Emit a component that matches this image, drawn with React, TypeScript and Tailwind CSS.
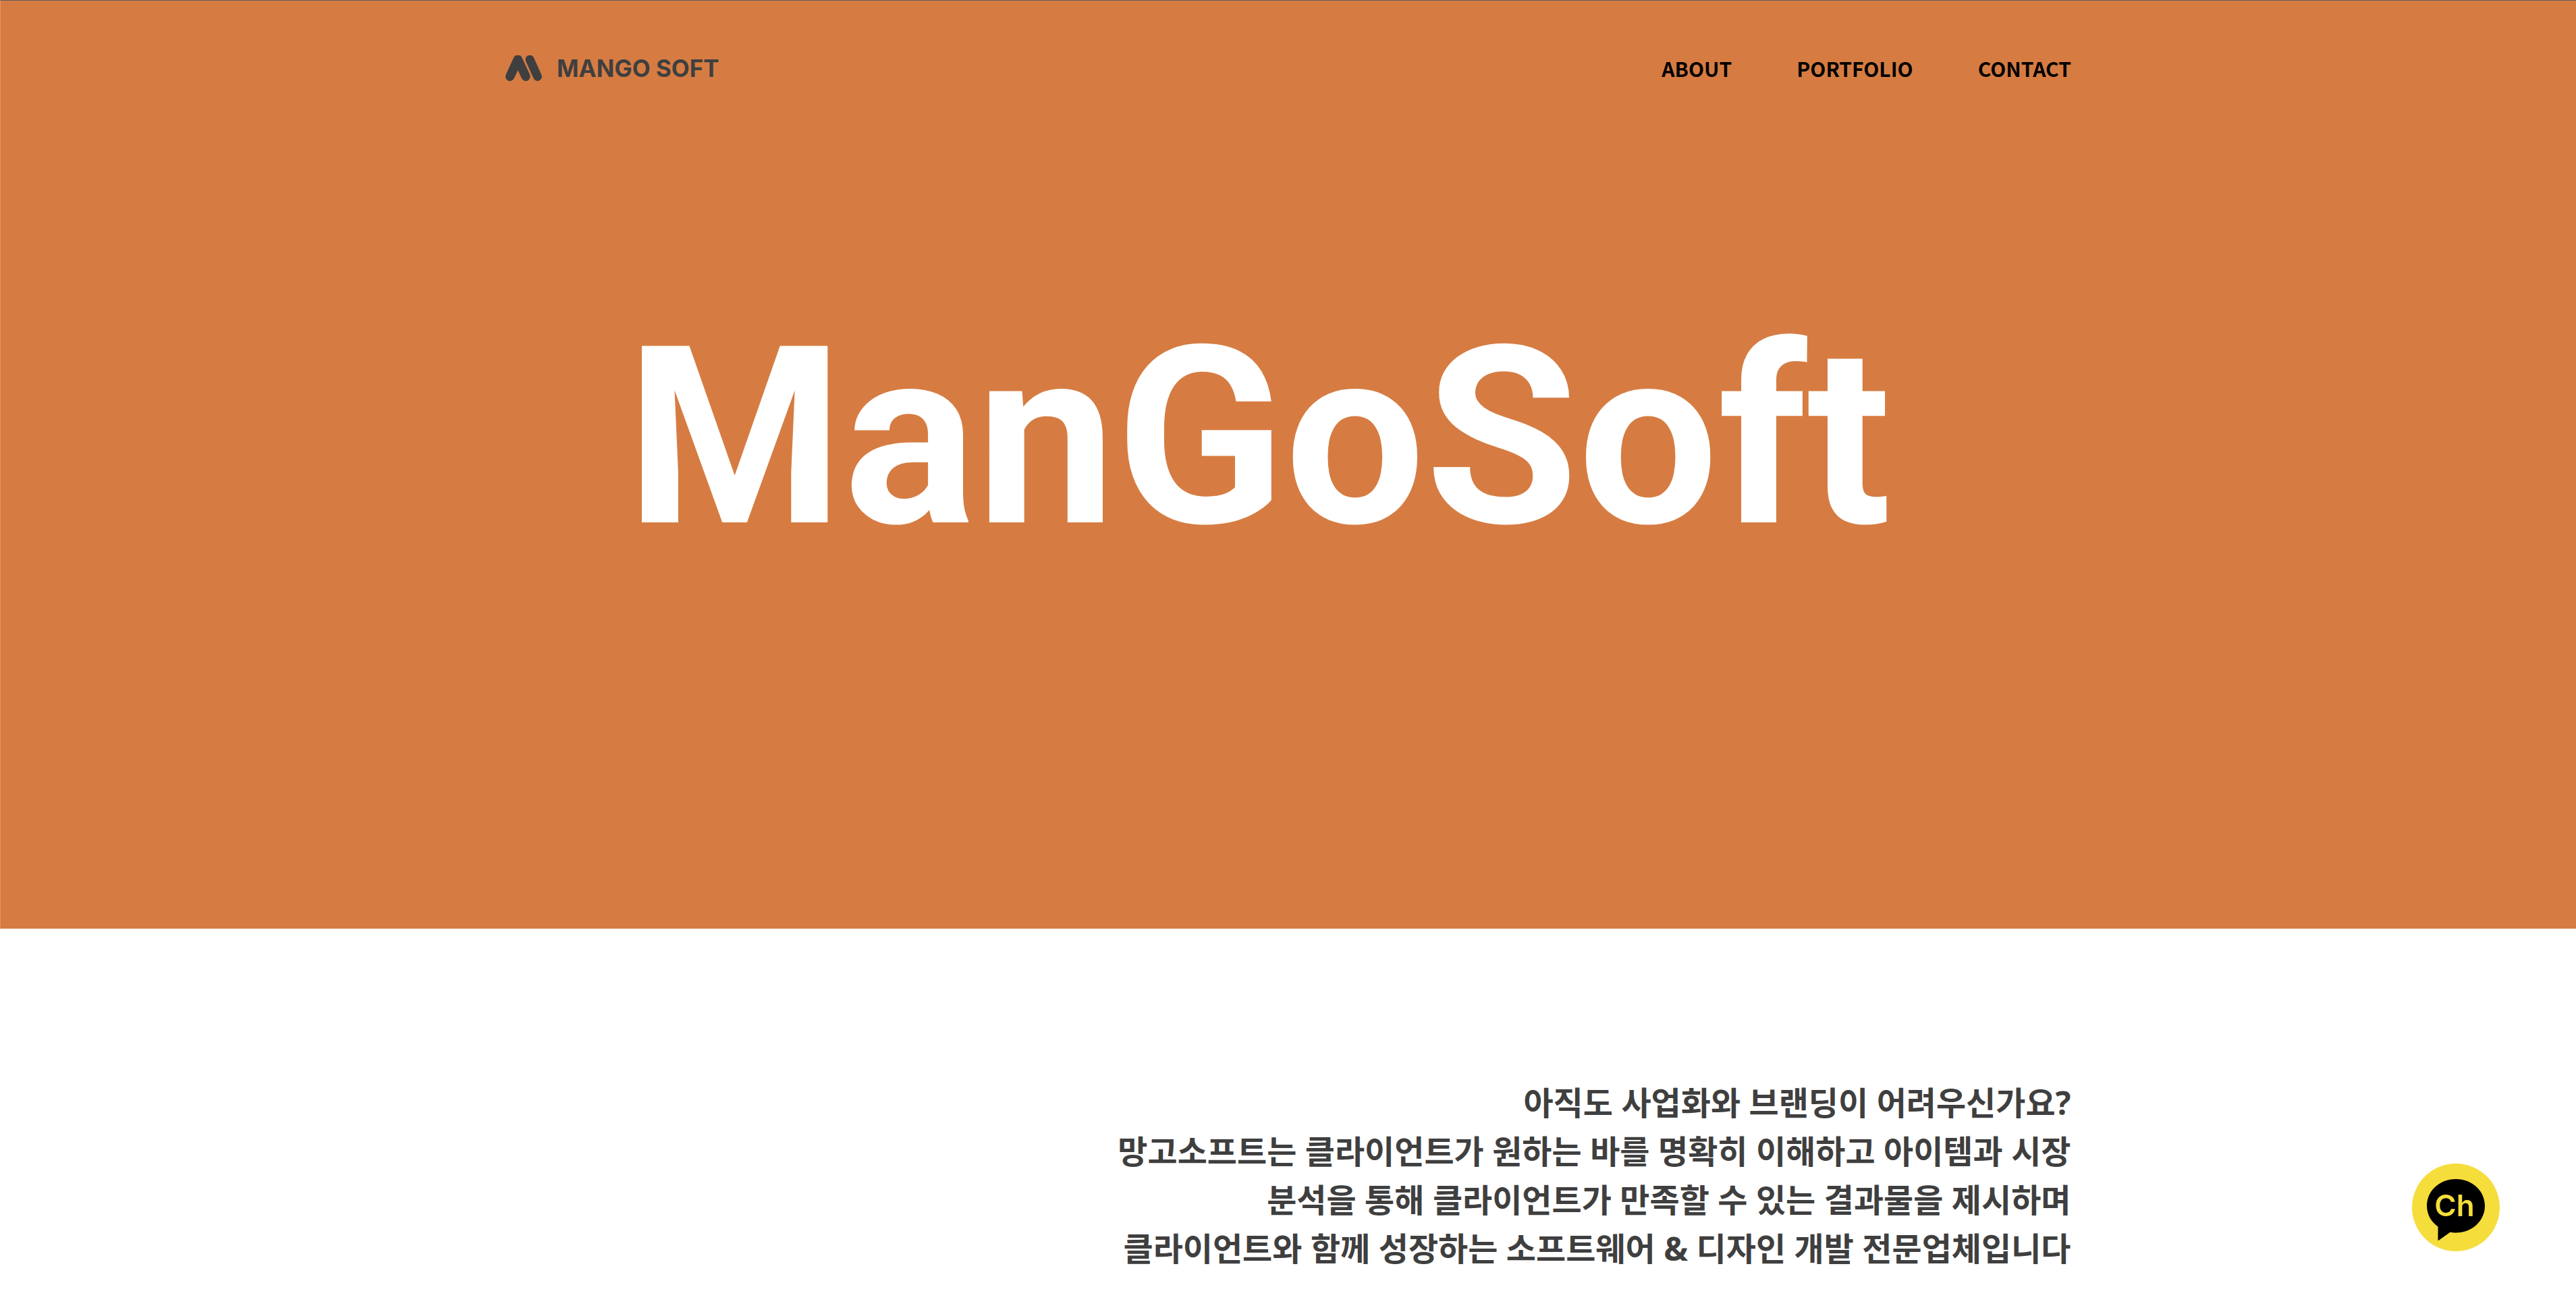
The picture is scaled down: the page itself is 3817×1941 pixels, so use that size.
const navItems = [
  { label: "ABOUT", href: "#about" },
  { label: "PORTFOLIO", href: "#portfolio" },
  { label: "CONTACT", href: "#contact" },
];

const introLines = [
  "아직도 사업화와 브랜딩이 어려우신가요?",
  "망고소프트는 클라이언트가 원하는 바를 명확히 이해하고 아이템과 시장",
  "분석을 통해 클라이언트가 만족할 수 있는 결과물을 제시하며",
  "클라이언트와 함께 성장하는 소프트웨어 & 디자인 개발 전문업체입니다",
];

function Logo() {
  return (
    <a href="#top" className="flex items-center gap-[22px] text-[#3f3f3f]">
      <svg viewBox="0 0 54 38" className="h-[38px] w-[54px]" fill="none" stroke="currentColor" aria-hidden="true">
        <path d="M6.7 31.300 L18.3 6 L30 31.300" strokeWidth="13.400" strokeLinecap="round" strokeLinejoin="round" />
        <path d="M36 6 L47.500 31.500" strokeWidth="12.800" strokeLinecap="round" />
      </svg>
      <span className="font-['Inter',sans-serif] text-[35px] leading-10 font-bold whitespace-nowrap">MANGO SOFT</span>
    </a>
  );
}

function Header() {
  return (
    <header className="mx-auto flex h-[200px] w-full max-w-[2320px] items-center justify-between">
      <Logo />
      <nav className="flex gap-24">
        {navItems.map((item) => (
          <a key={item.href} href={item.href} className="text-[30px] leading-12 font-bold text-black">
            {item.label}
          </a>
        ))}
      </nav>
    </header>
  );
}

function ChatButton() {
  return (
    <button
      type="button"
      aria-label="카카오톡 채널 상담"
      className="fixed right-[113px] bottom-[87px] size-[130px] cursor-pointer rounded-full bg-[#f5dd3c]"
    >
      <svg viewBox="0 0 130 130" className="size-full" aria-hidden="true">
        <path
          d="M65 23 C89 23 108 40.500 108 62.500 C108 85 89 102.500 65 102.500 C62 102.500 59 102.300 56.500 101.800 L40 113.500 C39 114.200 38.500 114 38.500 113 L38.500 93.500 C28 86 22 75 22 62.500 C22 40.500 41 23 65 23 Z"
          fill="#000000"
        />
        <text x="63" y="78" textAnchor="middle" fill="#f5dd3c" className="font-['Inter',sans-serif] text-[44px] font-semibold">
          Ch
        </text>
      </svg>
    </button>
  );
}

export default function App() {
  return (
    <div id="top" className="min-h-screen bg-white font-['Noto_Sans_CJK_KR',sans-serif]">
      <section className="border-t border-l border-t-[#605c5a] border-l-[#df9564] bg-[#d67c42] pb-[543px]">
        <Header />
        <h1 className="pt-[264px] pr-[88px] text-center font-['Roboto',sans-serif] text-[368px] leading-[368px] font-bold whitespace-nowrap text-white">
          ManGoSoft
        </h1>
      </section>
      <main id="about" className="mx-auto max-w-[2320px] pt-[222px]">
        <p className="text-right font-['Noto_Sans','Noto_Sans_CJK_KR',sans-serif] text-5xl leading-[72px] font-bold text-[#3f3f3f]">
          {introLines.map((line) => (
            <span key={line} className="block">
              {line}
            </span>
          ))}
        </p>
      </main>
      <ChatButton />
    </div>
  );
}
